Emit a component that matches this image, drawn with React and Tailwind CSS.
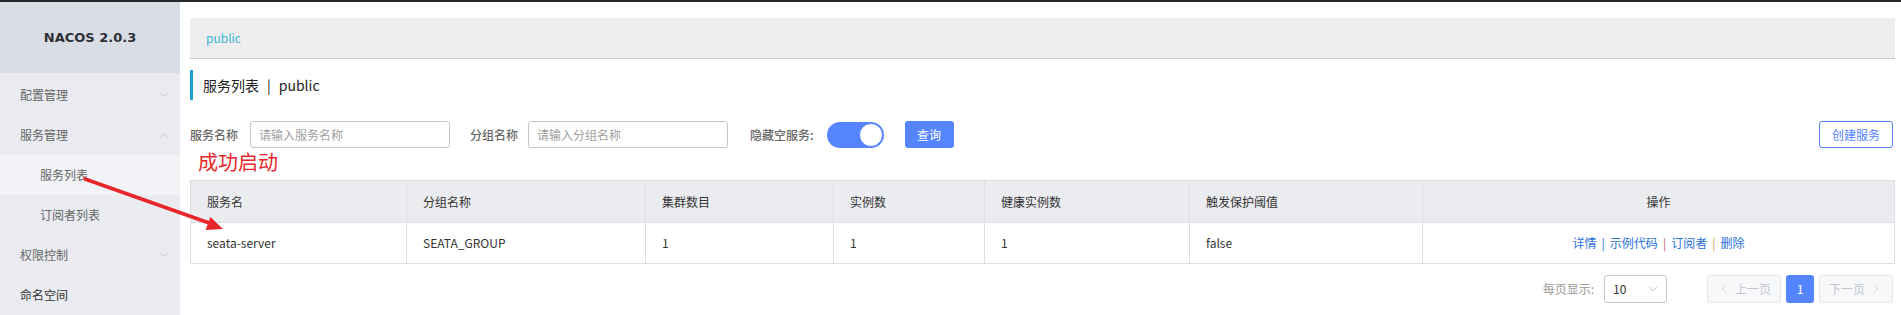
import React from "react";
import { ChevronDown, ChevronUp, ChevronLeft, ChevronRight } from "lucide-react";

const menu = [
  { label: "配置管理", icon: "down" },
  { label: "服务管理", icon: "up" },
  { label: "服务列表", sub: true, active: true },
  { label: "订阅者列表", sub: true },
  { label: "权限控制", icon: "down" },
  { label: "命名空间", dark: true },
];

const cols = [
  { title: "服务名", w: "w-[216px]", value: "seata-server" },
  { title: "分组名称", w: "w-[239px]", value: "SEATA_GROUP" },
  { title: "集群数目", w: "w-[188px]", value: "1" },
  { title: "实例数", w: "w-[151px]", value: "1" },
  { title: "健康实例数", w: "w-[205px]", value: "1" },
  { title: "触发保护阈值", w: "w-[233px]", value: "false" },
];

function Sidebar() {
  return (
    <div className="w-[180px] shrink-0 bg-[#e9ebf0] h-full">
      <div className="h-[71px] bg-[#d9dde4] flex items-center justify-center">
        <span className="font-['DejaVu_Sans',sans-serif] font-bold text-[13px] text-[#2c2f36]">NACOS 2.0.3</span>
      </div>
      <div className="pt-[2px]">
        {menu.map((m) => (
          <div
            key={m.label}
            className={`h-10 flex items-center justify-between pr-[10px] ${m.sub ? "pl-10" : "pl-5"} ${
              m.active ? "bg-[#f2f3f6]" : ""
            }`}
          >
            <span className={`text-xs ${m.dark ? "text-[#333]" : "text-[#666]"}`}>{m.label}</span>
            {m.icon === "down" && <ChevronDown size={12} strokeWidth={1.2} className="text-[#aaa]" />}
            {m.icon === "up" && <ChevronUp size={12} strokeWidth={1.2} className="text-[#aaa]" />}
          </div>
        ))}
      </div>
    </div>
  );
}

function Toolbar() {
  return (
    <div className="mt-[21px] h-[27px] flex items-center justify-between pr-[2px]">
      <div className="flex items-center h-full">
        <span className="text-xs font-medium text-[#666]">服务名称</span>
        <div className="ml-3 w-[200px] h-full border border-[#c4c6cf] rounded-[3px] flex items-center px-2 text-xs text-[#a0a0a0]">
          请输入服务名称
        </div>
        <span className="ml-5 text-xs font-medium text-[#666]">分组名称</span>
        <div className="ml-[10px] w-[200px] h-full border border-[#c4c6cf] rounded-[3px] flex items-center px-2 text-xs text-[#a0a0a0]">
          请输入分组名称
        </div>
        <span className="ml-[22px] text-xs font-medium text-[#666]">隐藏空服务:</span>
        <div className="ml-[13px] w-[57px] h-[26px] rounded-full bg-[#5584ff] flex items-center justify-end pr-[1px]">
          <div className="w-6 h-6 rounded-full bg-white border border-[#5584ff]" />
        </div>
        <button className="ml-[21px] w-[49px] h-full rounded-[3px] bg-[#5584ff] text-white text-xs">查询</button>
      </div>
      <button className="w-[74px] h-full rounded-[3px] border border-[#5584ff] text-[#5584ff] text-xs bg-white">
        创建服务
      </button>
    </div>
  );
}

function ServiceTable() {
  return (
    <table className="mt-8 w-full table-fixed border-collapse border border-[#dcdee3] text-xs">
      <colgroup>
        {cols.map((c) => (
          <col key={c.title} className={c.w} />
        ))}
        <col />
      </colgroup>
      <thead>
        <tr className="h-[42px] bg-[#ebecf0] text-[#333]">
          {cols.map((c) => (
            <th key={c.title} className="font-normal text-left pl-4 border-r border-b border-[#dcdee3]">
              {c.title}
            </th>
          ))}
          <th className="font-normal text-center border-b border-[#dcdee3]">操作</th>
        </tr>
      </thead>
      <tbody>
        <tr className="h-[41px] text-[#333]">
          {cols.map((c) => (
            <td key={c.title} className="pl-4 border-r border-[#dcdee3]">
              {c.value}
            </td>
          ))}
          <td className="text-center text-[#2a72d8]">
            <span>详情</span>
            <span className="mx-[5px] text-[#2a72d8]">|</span>
            <span>示例代码</span>
            <span className="mx-[5px] text-[#b86a5c]">|</span>
            <span>订阅者</span>
            <span className="mx-[5px] text-[#d99a4a]">|</span>
            <span>删除</span>
          </td>
        </tr>
      </tbody>
    </table>
  );
}

function Pager() {
  return (
    <div className="mt-[11px] h-7 flex items-center justify-end pr-[2px] text-xs">
      <span className="text-[#999]">每页显示:</span>
      <div className="ml-[10px] w-[63px] h-full border border-[#c4c6cf] rounded-[3px] flex items-center justify-between pl-2 pr-[6px] text-[#333]">
        <span>10</span>
        <ChevronDown size={14} strokeWidth={1} className="text-[#888]" />
      </div>
      <div className="ml-10 w-[74px] h-full rounded-[3px] border border-[#e6e7eb] bg-[#f7f8fa] flex items-center justify-center gap-1 text-[#c4c6cf]">
        <ChevronLeft size={14} strokeWidth={1.2} />
        <span>上一页</span>
      </div>
      <div className="ml-[5px] w-[28px] h-full rounded-[3px] bg-[#5584ff] text-white flex items-center justify-center">1</div>
      <div className="ml-[5px] w-[74px] h-full rounded-[3px] border border-[#e6e7eb] bg-[#f7f8fa] flex items-center justify-center gap-1 text-[#c4c6cf]">
        <span>下一页</span>
        <ChevronRight size={14} strokeWidth={1.2} />
      </div>
    </div>
  );
}

export default function App() {
  return (
    <div className="relative w-[1901px] h-[315px] overflow-hidden bg-white border-t-2 border-[#25292e] font-['Noto_Sans_CJK_SC',sans-serif]">
      <div className="flex h-full">
        <Sidebar />

        <div className="flex-1 pl-[10px] pr-[6px]">
          {/* breadcrumb */}
          <div className="mt-4 h-[41px] bg-[#eeeeee] border-b border-[#cccccc] flex items-center pl-4">
            <span className="text-xs text-[#3bb4d8]">public</span>
          </div>

          {/* title */}
          <div className="mt-[11px] h-[30px] border-l-[3px] border-[#1e9fd6] flex items-center pl-[10px] text-sm text-[#222]">
            服务列表<span className="mx-2">|</span>public
          </div>

          <Toolbar />
          <ServiceTable />
          <Pager />
        </div>
      </div>

      {/* annotation */}
      <span className="absolute left-[198px] top-[146px] text-[20px] leading-7 text-[#e8262a]">成功启动</span>
      <svg className="absolute left-0 top-0 pointer-events-none" width="400" height="315" viewBox="0 0 400 315">
        <line x1="85" y1="177" x2="212" y2="222" stroke="#e8262a" strokeWidth="3.5" strokeLinecap="round" />
        <polygon points="223,227 205.6,228 210.4,214.9" fill="#e8262a" />
      </svg>
    </div>
  );
}
